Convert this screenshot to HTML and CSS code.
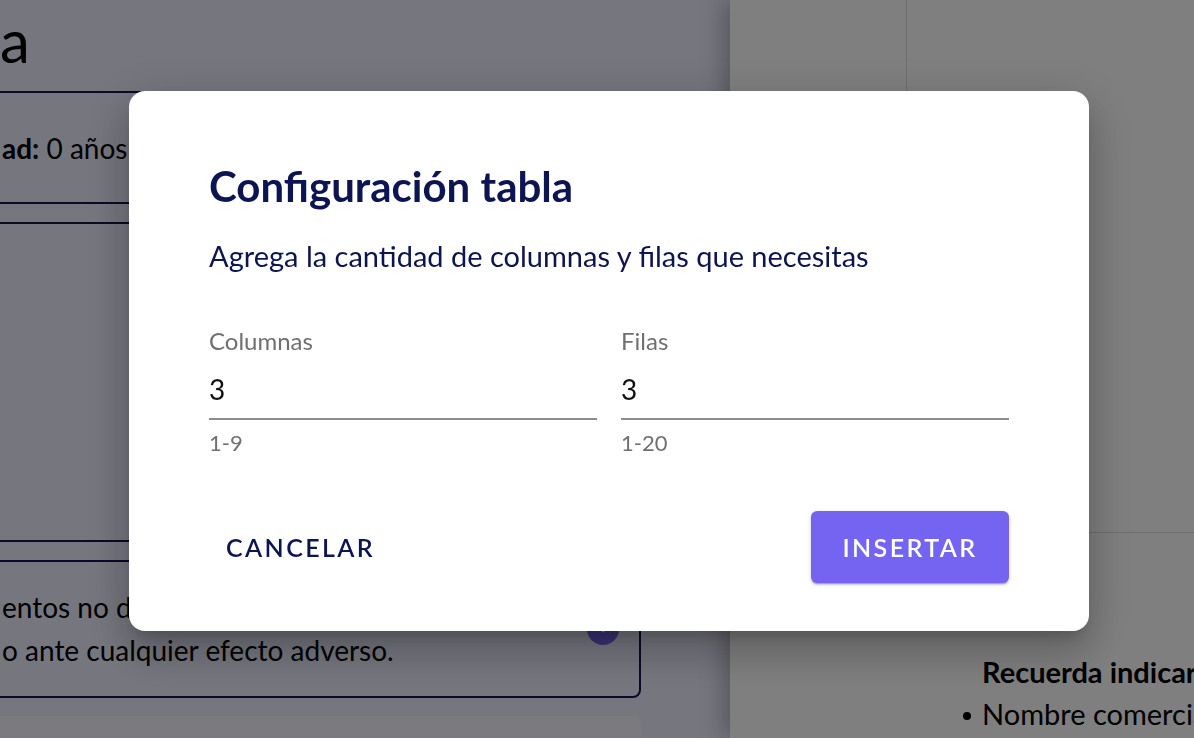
FILE: index.html
```html
<!DOCTYPE html>
<html lang="es">
<head>
<meta charset="utf-8">
<title>Configuración tabla</title>
<link rel="stylesheet" href="styles.css">
</head>
<body>
<div class="page">
  <main class="main">
    <h1 class="main-title">a</h1>
    <section class="box box-info">
      <p><strong>ad:</strong> 0 años</p>
    </section>
    <section class="box box-editor"></section>
    <section class="box box-note">
      <p>entos no descritos en este prospecto, consulte<br>o ante cualquier efecto adverso.</p>
      <span class="note-icon">
        <svg viewBox="0 0 24 24" width="18" height="18"><path d="M6 9l6 6 6-6" fill="none" stroke="#fff" stroke-width="3" stroke-linecap="round" stroke-linejoin="round"/></svg>
      </span>
    </section>
    <section class="box box-soft"></section>
  </main>
  <aside class="aside">
    <div class="aside-top">
      <div class="aside-col"></div>
      <div class="aside-rest"></div>
    </div>
    <div class="aside-bottom">
      <p class="remember">Recuerda indicar</p>
      <ul class="remember-list">
        <li>Nombre comercial</li>
      </ul>
    </div>
  </aside>
</div>

<div class="overlay">
  <div class="dialog" role="dialog">
    <h2 class="dialog-title">Configuración tabla</h2>
    <p class="dialog-text">Agrega la cantidad de columnas y filas que necesitas</p>
    <div class="fields">
      <div class="field">
        <label class="field-label">Columnas</label>
        <div class="field-input">3</div>
        <div class="field-help">1-9</div>
      </div>
      <div class="field">
        <label class="field-label">Filas</label>
        <div class="field-input">3</div>
        <div class="field-help">1-20</div>
      </div>
    </div>
    <div class="actions">
      <button class="btn btn-text">CANCELAR</button>
      <button class="btn btn-primary">INSERTAR</button>
    </div>
  </div>
</div>
</body>
</html>
```

FILE: styles.css
```css
* { box-sizing: border-box; }

html, body {
  margin: 0;
  padding: 0;
  width: 1194px;
  height: 738px;
  overflow: hidden;
  font-family: "Lato", "Noto Sans", sans-serif;
}

.page {
  display: flex;
  width: 1194px;
  height: 738px;
  overflow: hidden;
}

/* ---------- background page ---------- */
.main {
  width: 730px;
  flex: none;
  background: #ececfe;
  padding-right: 89px;
  overflow: hidden;
  color: #000;
}

.main-title {
  margin: 4px 0 15px 0;
  font-size: 60px;
  font-weight: 400;
  line-height: 72px;
}

.box {
  margin-left: -20px;
  padding-left: 20px;
  border: 2px solid #15154f;
  border-radius: 8px;
}

.box p { margin: 0; }

.box-info {
  height: 113px;
  display: flex;
  align-items: center;
  font-size: 28px;
  margin-bottom: 18px;
}

.box-editor {
  height: 320px;
  margin-bottom: 18px;
}

.box-note {
  height: 138px;
  display: flex;
  align-items: center;
  justify-content: space-between;
  padding-right: 20px;
  font-size: 28px;
  line-height: 43px;
  white-space: nowrap;
  margin-bottom: 18px;
}

.note-icon {
  width: 32px;
  height: 32px;
  border-radius: 50%;
  background: #7563f1;
  display: flex;
  align-items: center;
  justify-content: center;
  flex: none;
}

.box-soft {
  height: 80px;
  border: none;
  background: #f5f5ff;
}

.aside {
  flex: 1;
  background: #fefefe;
  position: relative;
  z-index: 1;
  box-shadow: -6px 0 22px rgba(0, 0, 0, 0.28);
  overflow: hidden;
  white-space: nowrap;
  color: #000;
}

.aside-top {
  display: flex;
  height: 533px;
  border-bottom: 1px solid #dedede;
}

.aside-col {
  width: 177px;
  border-right: 1px solid #dedede;
}

.aside-bottom {
  padding: 119px 0 0 252px;
  font-size: 29px;
}

.remember {
  margin: 0;
  font-weight: 700;
  line-height: 40px;
}

.remember-list {
  margin: 2px 0 0 0;
  padding-left: 0;
  list-style: none;
  line-height: 40px;
}

.remember-list li {
  position: relative;
}

.remember-list li::before {
  content: "";
  position: absolute;
  left: -19px;
  top: 18px;
  width: 8px;
  height: 8px;
  border-radius: 50%;
  background: #000;
}

/* ---------- modal ---------- */
.overlay {
  position: fixed;
  inset: 0;
  background: rgba(0, 0, 0, 0.5);
  z-index: 10;
  display: flex;
  align-items: flex-start;
  padding: 91px 0 0 129px;
}

.dialog {
  width: 960px;
  height: 540px;
  background: #fff;
  border-radius: 16px;
  padding: 70px 80px 48px 80px;
  display: flex;
  flex-direction: column;
  color: #0d1452;
  box-shadow:
    0 11px 15px -7px rgba(0, 0, 0, 0.2),
    0 24px 38px 3px rgba(0, 0, 0, 0.14),
    0 9px 46px 8px rgba(0, 0, 0, 0.12);
}

.dialog-title {
  margin: 0;
  font-size: 42px;
  font-weight: 700;
  line-height: 50px;
}

.dialog-text {
  margin: 27px 0 0 0;
  font-size: 29px;
  line-height: 36px;
}

.fields {
  margin-top: 52px;
  display: grid;
  grid-template-columns: 1fr 1fr;
  column-gap: 24px;
}

.field {
  display: flex;
  flex-direction: column;
}

.field-label {
  font-size: 24px;
  line-height: 29px;
  color: #707070;
}

.field-input {
  margin-top: 17px;
  font-size: 28px;
  line-height: 34px;
  color: #111;
  padding-bottom: 12px;
  border-bottom: 2px solid #8c8c8c;
}

.field-help {
  margin-top: 10px;
  font-size: 22px;
  line-height: 26px;
  color: #707070;
}

.actions {
  margin-top: auto;
  display: flex;
  justify-content: space-between;
  align-items: center;
}

.btn {
  font-family: inherit;
  font-size: 25px;
  font-weight: 600;
  letter-spacing: 2.4px;
  height: 72px;
  border: none;
  border-radius: 6px;
  cursor: pointer;
}

.btn-text {
  background: transparent;
  color: #0d1452;
  padding: 0 17px;
}

.btn-primary {
  width: 198px;
  background: #7563f1;
  color: #fff;
  padding: 0 30px;
  box-shadow:
    0 3px 1px -2px rgba(0, 0, 0, 0.2),
    0 2px 2px 0 rgba(0, 0, 0, 0.14),
    0 1px 5px 0 rgba(0, 0, 0, 0.12);
}
```
